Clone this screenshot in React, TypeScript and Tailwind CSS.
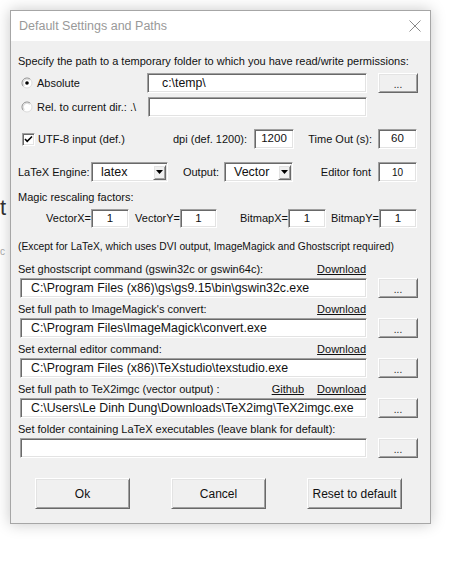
import React from 'react';

const FONT = { fontFamily: '"Liberation Sans", Arial, sans-serif' };

/* ─── Classic win32 bits ─── */
const sunken =
  'bg-white border border-t-[#a0a0a0] border-l-[#a0a0a0] border-b-white border-r-white shadow-[inset_1px_1px_0_#696969,inset_-1px_-1px_0_#e3e3e3]';
const raised =
  'bg-[#f0f0f0] border border-t-white border-l-white border-b-[#696969] border-r-[#696969] shadow-[inset_1px_1px_0_#e3e3e3,inset_-1px_-1px_0_#a0a0a0]';

const Radio = ({ checked }: { checked?: boolean }) => (
  <svg width="12" height="12" viewBox="0 0 12 12" className="flex-shrink-0">
    <circle cx="6" cy="6" r="5" fill="#fff" />
    <path d="M2.46 9.54 A5 5 0 0 1 9.54 2.46" fill="none" stroke="#8c8c8c" strokeWidth="1" />
    <path d="M9.54 2.46 A5 5 0 0 1 2.46 9.54" fill="none" stroke="#dcdcdc" strokeWidth="1" />
    <path d="M3.3 8.7 A3.8 3.8 0 0 1 8.7 3.3" fill="none" stroke="#c8c8c8" strokeWidth="0.8" />
    {checked && <circle cx="6" cy="6" r="1.8" fill="#000" />}
  </svg>
);

const CheckBox = () => (
  <div className={`w-[13px] h-[13px] flex items-center justify-center ${sunken}`}>
    <svg width="9" height="9" viewBox="0 0 9 9">
      <path d="M1 4 L3.2 6.3 L8 1.5" fill="none" stroke="#000" strokeWidth="1.6" />
    </svg>
  </div>
);

const Field = ({ value, className }: { value?: string; className?: string }) => (
  <div className={`h-full flex items-center text-[12.3px] text-[#111] whitespace-nowrap overflow-hidden ${sunken} ${className ?? ''}`}>
    {value}
  </div>
);

const Num = ({ value, w, small }: { value: string; w: string; small?: boolean }) => (
  <div className={`${w} h-full flex items-center justify-center ${small ? 'text-[10px]' : 'text-[11.5px]'} text-[#111] ${sunken}`}>
    {value}
  </div>
);

const Browse = () => (
  <div className={`w-[40px] h-[20px] flex items-center justify-center text-[10px] text-[#222] pt-[2px] ${raised}`}>...</div>
);

const Combo = ({ value, w }: { value: string; w: string }) => (
  <div className={`${w} h-full flex items-center justify-between pl-[9px] pr-[1px] text-[12.5px] text-[#111] ${sunken}`}>
    <span>{value}</span>
    <div className={`w-[13px] h-[15px] flex items-center justify-center ${raised}`}>
      <svg width="7" height="4" viewBox="0 0 7 4">
        <path d="M0 0 L7 0 L3.5 4 Z" fill="#000" />
      </svg>
    </div>
  </div>
);

const PathRow = ({
  label,
  value,
  github,
  mt,
}: {
  label: string;
  value: string;
  github?: boolean;
  mt: string;
}) => (
  <>
    <div className={`${mt} h-[14px] w-[348px] flex items-center text-[11px] text-[#111]`}>
      <span className="flex-1 whitespace-nowrap">{label}</span>
      {github && <span className="underline mr-[13px]">Github</span>}
      <span className="underline">Download</span>
    </div>
    <div className="mt-[2px] h-[20px] flex items-center">
      <Field value={value} className="ml-[2px] w-[347px] pl-[10px]" />
      <div className="ml-[11px]">
        <Browse />
      </div>
    </div>
  </>
);

const DialogButton = ({ label }: { label: string }) => (
  <div className={`w-[95px] h-[31px] flex items-center justify-center text-[12px] text-[#111] ${raised}`}>
    {label}
  </div>
);

export default function App() {
  return (
    <div className="relative w-[470px] h-[585px] bg-white overflow-hidden" style={FONT}>
      {/* bits of the window behind */}
      <span className="absolute left-0 top-[197px] text-[22px] leading-[22px] text-[#333]">t</span>
      <span className="absolute left-0 top-[247px] text-[10px] leading-[10px] text-[#aaa]">c</span>

      {/* ── Dialog window ── */}
      <div className="absolute left-[10px] top-[10px] w-[421px] h-[514px] border border-[#a6a6a6] bg-[#f0f0f0] shadow-[0_0_14px_rgba(0,0,0,0.22)] flex flex-col">
        {/* title bar */}
        <div className="h-[30px] bg-white flex items-center pl-[8px] pr-[8px] flex-shrink-0">
          <span className="flex-1 text-[12.5px] text-[#999]">Default Settings and Paths</span>
          <svg width="12" height="12" viewBox="0 0 12 12" className="mr-[1px]">
            <path d="M0.5 0.5 L11.5 11.5 M11.5 0.5 L0.5 11.5" stroke="#8a8a8a" strokeWidth="1" />
          </svg>
        </div>

        {/* body */}
        <div className="flex flex-col pl-[7px] text-[11px] text-[#111]">
          <div className="mt-[12px] h-[16px] flex items-center whitespace-nowrap">
            Specify the path to a temporary folder to which you have read/write permissions:
          </div>

          <div className="mt-[4px] h-[20px] flex items-center">
            <div className="w-[129px] flex items-center pl-[3px]">
              <Radio checked />
              <span className="ml-[4px]">Absolute</span>
            </div>
            <Field value="c:\temp\" className="w-[220px] pl-[14px]" />
            <div className="ml-[11px]">
              <Browse />
            </div>
          </div>

          <div className="mt-[4px] h-[20px] flex items-center">
            <div className="w-[130px] flex items-center pl-[3px]">
              <Radio />
              <span className="ml-[4px] whitespace-nowrap">Rel. to current dir.: .\</span>
            </div>
            <Field className="w-[219px]" />
          </div>

          <div className="mt-[12px] h-[20px] flex items-center">
            <div className="w-[236px] flex items-center justify-between pl-[4px] pr-[7px]">
              <div className="flex items-center">
                <CheckBox />
                <span className="ml-[3px]">UTF-8 input (def.)</span>
              </div>
              <span>dpi (def. 1200):</span>
            </div>
            <Num value="1200" w="w-[40px]" />
            <div className="w-[84px] text-right pr-[6px]">Time Out (s):</div>
            <Num value="60" w="w-[39px]" />
          </div>

          <div className="mt-[13px] h-[20px] flex items-center">
            <div className="w-[73px] whitespace-nowrap">LaTeX Engine:</div>
            <Combo value="latex" w="w-[77px]" />
            <div className="w-[56px] text-right pr-[5px]">Output:</div>
            <Combo value="Vector" w="w-[69px]" />
            <div className="w-[85px] text-right pr-[7px]">Editor font</div>
            <Num value="10" w="w-[39px]" small />
          </div>

          <div className="mt-[8px] h-[14px] flex items-center">Magic rescaling factors:</div>

          <div className="mt-[5px] h-[19px] flex items-center">
            <div className="w-[73px] text-right">VectorX=</div>
            <Num value="1" w="w-[38px]" />
            <div className="w-[51px] text-right">VectorY=</div>
            <Num value="1" w="w-[37px]" />
            <div className="w-[71px] text-right">BitmapX=</div>
            <Num value="1" w="w-[38px]" />
            <div className="w-[53px] text-right">BitmapY=</div>
            <Num value="1" w="w-[38px]" />
          </div>

          <div className="mt-[12px] h-[14px] flex items-center whitespace-nowrap text-[10.3px]">
            (Except for LaTeX, which uses DVI output, ImageMagick and Ghostscript required)
          </div>

          <PathRow mt="mt-[8px]" label="Set ghostscript command (gswin32c or gswin64c):" value="C:\Program Files (x86)\gs\gs9.15\bin\gswin32c.exe" />
          <PathRow mt="mt-[4px]" label="Set full path to ImageMagick's convert:" value="C:\Program Files\ImageMagick\convert.exe" />
          <PathRow mt="mt-[4px]" label="Set external editor command:" value="C:\Program Files (x86)\TeXstudio\texstudio.exe" />
          <PathRow mt="mt-[4px]" label="Set full path to TeX2imgc (vector output) :" value="C:\Users\Le Dinh Dung\Downloads\TeX2img\TeX2imgc.exe" github />

          <div className="mt-[4px] h-[14px] flex items-center whitespace-nowrap">
            Set folder containing LaTeX executables (leave blank for default):
          </div>
          <div className="mt-[2px] h-[20px] flex items-center">
            <Field className="ml-[2px] w-[347px]" />
            <div className="ml-[11px]">
              <Browse />
            </div>
          </div>

          <div className="mt-[20px] flex items-center gap-[41px] pl-[17px]">
            <DialogButton label="Ok" />
            <DialogButton label="Cancel" />
            <DialogButton label="Reset to default" />
          </div>
        </div>
      </div>
    </div>
  );
}
